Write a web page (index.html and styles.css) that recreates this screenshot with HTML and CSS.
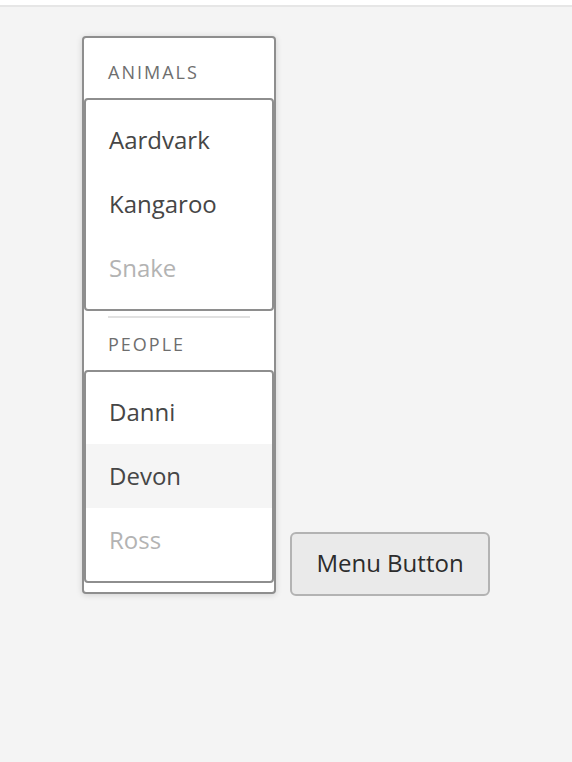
FILE: index.html
```html
<!DOCTYPE html>
<html>
<head>
<meta charset="utf-8">
<link rel="stylesheet" href="styles.css">
</head>
<body>
<div class="topbar"></div>
<main class="stage">
  <div class="popover">
    <div class="section-header">Animals</div>
    <ul class="listbox">
      <li class="item">Aardvark</li>
      <li class="item">Kangaroo</li>
      <li class="item disabled">Snake</li>
    </ul>
    <div class="separator"></div>
    <div class="section-header">People</div>
    <ul class="listbox">
      <li class="item">Danni</li>
      <li class="item hovered">Devon</li>
      <li class="item disabled">Ross</li>
    </ul>
  </div>
  <button class="menu-button">Menu Button</button>
</main>
</body>
</html>
```
FILE: styles.css
```css
* { box-sizing: border-box; }
html, body {
  margin: 0;
  padding: 0;
  height: 100%;
  background: #f4f4f4;
  font-family: "Open Sans", "Liberation Sans", sans-serif;
}
.topbar {
  height: 7px;
  background: #ffffff;
  border-bottom: 2px solid #e6e6e6;
}
.stage {
  display: flex;
  align-items: flex-end;
  gap: 14px;
  padding: 29px 0 0 82px;
}
.popover {
  width: 194px;
  background: #ffffff;
  border: 2px solid #8e8e8e;
  border-radius: 4px;
  box-shadow: 0 1px 6px rgba(0, 0, 0, 0.15);
  padding: 8px 0 9px;
}
.section-header {
  height: 52px;
  padding: 15px 24px 0;
  font-size: 18px;
  line-height: 22px;
  letter-spacing: 2px;
  text-transform: uppercase;
  color: #6e6e6e;
}
.listbox {
  list-style: none;
  margin: 0;
  padding: 8px 0 9px;
  border: 2px solid #8e8e8e;
  border-radius: 4px;
}
.item {
  height: 64px;
  display: flex;
  align-items: center;
  padding: 0 0 2px 23px;
  font-size: 24px;
  color: #464646;
}
.item.hovered { background: #f5f5f5; }
.item.disabled { color: #b3b3b3; }
.separator {
  height: 2px;
  margin: 5px 24px 0;
  background: #e1e1e1;
}
.menu-button {
  width: 200px;
  height: 64px;
  margin-bottom: -2px;
  background: #eaeaea;
  border: 2px solid #b3b3b3;
  border-radius: 6px;
  font-family: "Open Sans", "Liberation Sans", sans-serif;
  font-size: 24px;
  color: #2c2c2c;
  padding: 0 0 4px;
}
```
